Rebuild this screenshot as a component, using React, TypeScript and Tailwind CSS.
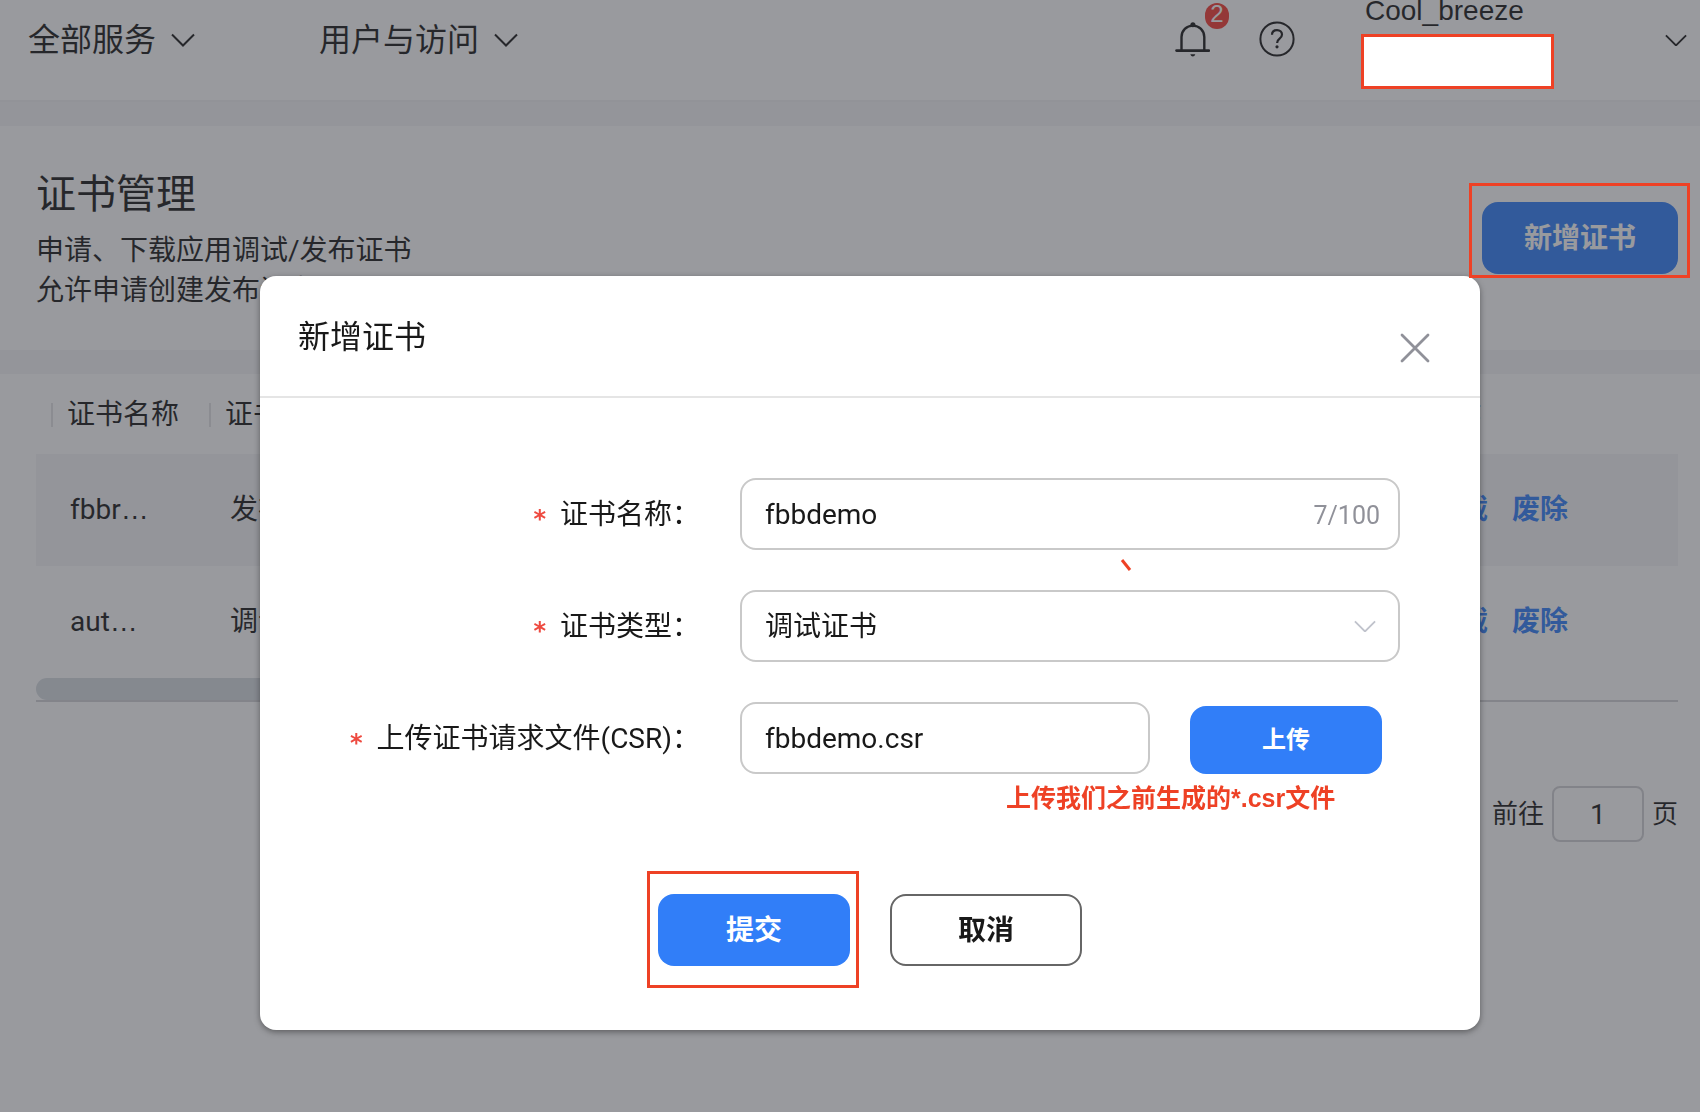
import React, { useState } from "react";

type Certificate = { name: string; type: string };

const certificates: Certificate[] = [
  { name: "fbbr", type: "发布证书" },
  { name: "aut", type: "调试证书" },
];

const navItems = ["全部服务", "用户与访问"];

function Chevron({ className }: { className: string }) {
  return (
    <svg viewBox="0 0 24 14" fill="none" stroke="currentColor" strokeWidth="2" className={className} aria-hidden="true">
      <path d="M1 1.5 12 12.5 23 1.5" />
    </svg>
  );
}

function BellIcon() {
  return (
    <svg viewBox="0 0 36 36" fill="none" stroke="currentColor" strokeWidth="2.4" className="size-9" aria-hidden="true">
      <path d="M7.5 29.5V16a11.4 11.4 0 0 1 22.8 0v13.5" />
      <path d="M2.500 29.600h32.500" strokeWidth="2.6" strokeLinecap="round" />
      <circle cx="18.900" cy="3.800" r="2.500" fill="currentColor" stroke="none" />
      <path d="M16.300 33.300h5c-.6 1.600-1.400 2.200-2.500 2.200s-1.900-.6-2.500-2.200z" fill="currentColor" stroke="none" />
    </svg>
  );
}

function HelpIcon() {
  return (
    <svg viewBox="0 0 36 36" fill="none" stroke="currentColor" strokeWidth="2" className="size-9" aria-hidden="true">
      <circle cx="18" cy="18" r="16.6" />
      <path d="M13 13.8c0-2.900 2.100-4.700 5-4.700s5 1.800 5 4.500c0 1.900-1 3-2.400 4.100-1.700 1.300-2.500 2.200-2.500 4.300" strokeWidth="2.2" />
      <circle cx="18" cy="25.8" r="1.6" fill="currentColor" stroke="none" />
    </svg>
  );
}

function Header() {
  return (
    <header className="flex h-[102px] items-start border-b-2 border-[#f0f0f2] bg-white pr-[13px] pl-7">
      <nav className="flex h-20 items-center gap-[124px]">
        {navItems.map((item) => (
          <button key={item} className="flex items-center gap-[15px] text-[32px] leading-10">
            {item}
            <Chevron className="w-6" />
          </button>
        ))}
      </nav>

      <div className="ml-auto flex h-[77px] items-center">
        <button className="relative" aria-label="消息">
          <BellIcon />
          <span className="absolute -top-[18px] left-[31px] h-[26px] w-6 rounded-full bg-[#f43b32] text-center font-['Liberation_Sans'] text-2xl leading-[22px] text-white">
            2
          </span>
        </button>
        <button className="ml-[49px]" aria-label="帮助">
          <HelpIcon />
        </button>
      </div>

      <div className="ml-[66px] w-[193px]">
        <p className="pl-1 font-['Liberation_Sans'] text-[28px] leading-[22px]">Cool_breeze</p>
        {/* Account id is covered */}
        <div className="relative z-30 mt-3 h-[55px] border-3 border-[#ee4125] bg-white" />
      </div>
      <button className="ml-[111px] flex h-20 items-center" aria-label="账号菜单">
        <Chevron className="w-[22px]" />
      </button>
    </header>
  );
}

function CertificateTable() {
  return (
    <div className="border-b-2 border-[#d3d3d6]">
      <table className="w-full table-fixed text-left text-[28px] leading-10">
        <thead>
          <tr className="h-20">
            {["证书名称", "证书类型", "操作"].map((title, i) => (
              <th key={title} className={`pt-0.5 pl-[15px] font-normal ${i === 0 ? "w-[158px]" : i === 2 ? "w-[284px]" : ""}`}>
                <div className="flex items-center gap-[14px] whitespace-nowrap">
                  <span className="h-6 w-0.5 bg-[#e2e2e5]" />
                  {title}
                </div>
              </th>
            ))}
          </tr>
        </thead>
        <tbody>
          {certificates.map((cert) => (
            <tr key={cert.name} className="h-28 odd:bg-[#f5f5f6]">
              <td className="pl-[34px]">
                {cert.name}
                <span className="font-['Liberation_Sans']">…</span>
              </td>
              <td className="pl-9">{cert.type}</td>
              <td className="pl-[38px]">
                <div className="flex gap-6 font-bold text-[#317ef8]">
                  <a href="#download">下载</a>
                  <a href="#revoke">废除</a>
                </div>
              </td>
            </tr>
          ))}
        </tbody>
      </table>
      {/* Horizontal scroll thumb */}
      <div className="h-[22px] w-4/5 rounded-full bg-[#d7dce1]" />
    </div>
  );
}

function Field({ id, label, children }: { id: string; label: string; children: React.ReactNode }) {
  return (
    <div className="grid grid-cols-[480px_1fr] items-center">
      <label htmlFor={id} className="flex items-center justify-end gap-[14px] pt-0.5 pr-10 text-[28px] leading-10">
        <span className="pt-2 font-['DejaVu_Sans'] text-2xl font-bold text-[#ee4a40]">*</span>
        {label}：
      </label>
      <div className="relative flex items-center">{children}</div>
    </div>
  );
}

function CreateDialog() {
  const [name, setName] = useState("fbbdemo");
  const [type, setType] = useState("调试证书");
  const field = "h-[72px] w-full rounded-2xl border-2 border-[#c9c9c9] bg-white px-[23px] text-[28px] leading-10 outline-none";

  return (
    <div className="fixed inset-0 z-10 flex items-start justify-center bg-[#33353d]/50 pt-[276px] pl-10">
      <div role="dialog" aria-labelledby="dialog-title" className="w-full max-w-[1220px] rounded-2xl bg-white pb-16 text-[#191919] shadow-[0_2px_6px_rgba(0,0,0,0.4)]">
        <div className="flex h-[122px] items-center justify-between border-b-2 border-[#e5e5e5] pr-[50px] pl-[38px]">
          <h2 id="dialog-title" className="pt-0.5 text-[32px] leading-10">新增证书</h2>
          <button aria-label="关闭" className="pt-6">
            <svg viewBox="0 0 30 30" stroke="#909199" strokeWidth="2.8" strokeLinecap="round" className="size-[30px]" aria-hidden="true">
              <path d="M2 2 28 28M28 2 2 28" />
            </svg>
          </button>
        </div>

        <form className="pt-20" onSubmit={(e) => e.preventDefault()}>
          <div className="flex flex-col gap-10 pr-20">
            <Field id="cert-name" label="证书名称">
              <input id="cert-name" value={name} onChange={(e) => setName(e.target.value)} className={field} />
              <span className="absolute right-5 pt-1 text-[25px] leading-8 text-[#909199]">{name.length}/100</span>
              <svg viewBox="0 0 12 12" stroke="#ee4125" strokeWidth="3" className="absolute top-[81px] left-[380px] size-3" aria-hidden="true">
                <path d="M2 1 10 11" />
              </svg>
            </Field>

            <Field id="cert-type" label="证书类型">
              <select id="cert-type" value={type} onChange={(e) => setType(e.target.value)} className={`${field} appearance-none pt-0.5`}>
                <option>调试证书</option>
                <option>发布证书</option>
              </select>
              <Chevron className="pointer-events-none absolute right-6 w-[22px] text-[#c0c3cc]" />
            </Field>

            <Field id="cert-csr" label="上传证书请求文件(CSR)">
              <input id="cert-csr" defaultValue="fbbdemo.csr" readOnly className={`${field} max-w-[410px]`} />
              <button type="button" className="mt-1 ml-10 h-[68px] w-48 rounded-2xl bg-[#317ef8] text-2xl font-bold text-white">
                上传
              </button>
              <p className="absolute top-20 left-[266px] font-['Liberation_Sans','Noto_Sans_CJK_SC',sans-serif] text-[25px] leading-8 font-bold whitespace-nowrap text-[#ee4125]">
                上传我们之前生成的*.csr文件
              </p>
            </Field>
          </div>

          <div className="mt-[120px] flex justify-center gap-10 text-[28px] font-bold">
            <div className="relative">
              <button type="submit" className="h-[72px] w-48 rounded-2xl bg-[#317ef8] pt-0.5 text-white">提交</button>
              <div className="pointer-events-none absolute -top-[23px] -right-[9px] -bottom-[22px] -left-[11px] border-3 border-[#ee4125]" />
            </div>
            <button type="button" className="h-[72px] w-48 rounded-2xl border-2 border-[#666] pt-0.5">取消</button>
          </div>
        </form>
      </div>
    </div>
  );
}

export default function App() {
  return (
    <div className="min-h-screen overflow-hidden bg-white font-[Roboto,'Noto_Sans_CJK_SC',sans-serif] text-[#191919]">
      <Header />

      <section className="flex justify-between border-y-24 border-[#f5f5f6] pt-[39px] pr-[22px] pb-[39px] pl-9">
        <div>
          <h1 className="text-[40px] leading-[60px]">证书管理</h1>
          <p className="mt-1.5 text-[28px] leading-10">申请、下载应用调试/发布证书</p>
          <p className="text-[28px] leading-10">允许申请创建发布证书</p>
        </div>
        <div className="relative mt-[37px] self-start">
          <button className="h-[72px] w-[196px] rounded-2xl bg-[#317ef8] pt-0.5 text-[28px] font-bold text-white">新增证书</button>
          <div className="pointer-events-none absolute -top-[19px] -right-3 -bottom-1 -left-[13px] z-30 border-3 border-[#ee4125]" />
        </div>
      </section>

      <main className="pr-[22px] pl-9">
        <CertificateTable />
        <div className="mt-[84px] flex items-center justify-end gap-2 text-[26px]">
          <label htmlFor="page">前往</label>
          <input id="page" defaultValue="1" className="h-14 w-[92px] rounded-lg border-2 border-[#d1d1d4] text-center text-[28px]" />
          <span>页</span>
        </div>
      </main>

      <CreateDialog />
    </div>
  );
}
